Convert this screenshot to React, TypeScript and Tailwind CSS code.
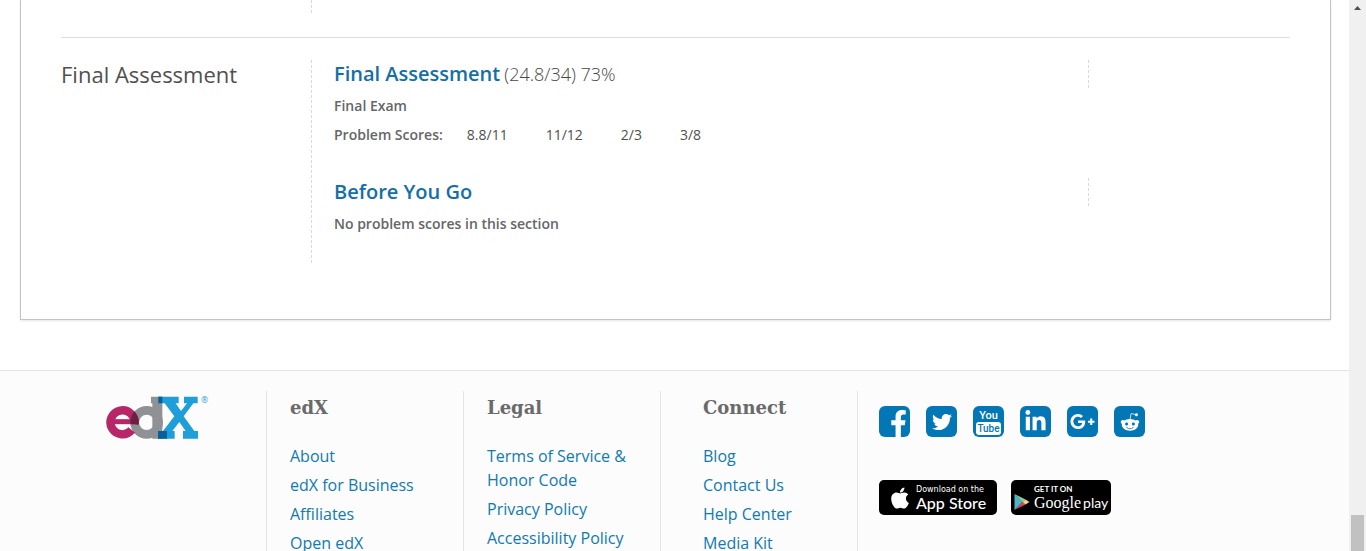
import type { ReactNode } from "react";
import {
  FaApple,
  FaFacebookF,
  FaGooglePlusG,
  FaLinkedinIn,
  FaRedditAlien,
  FaTwitter,
} from "react-icons/fa";

type Section = {
  title: string;
  total?: string;
  note: string;
  scores: string[];
};

const sections: Section[] = [
  {
    title: "Final Assessment",
    total: "(24.8/34) 73%",
    note: "Final Exam",
    scores: ["8.8/11", "11/12", "2/3", "3/8"],
  },
  { title: "Before You Go", note: "No problem scores in this section", scores: [] },
];

function DashedLine() {
  return (
    <div className="w-px shrink-0 self-stretch bg-[repeating-linear-gradient(to_bottom,#dadada_0px,#dadada_3px,transparent_3px,transparent_5px)]" />
  );
}

function SectionScores({ title, total, note, scores }: Section) {
  return (
    <section>
      <div className="mr-[201px] flex h-7 justify-between">
        <h3 className="text-xl leading-7 font-semibold">
          <a href="#section" className="text-[#126fa8]">
            {title}
          </a>
          {total && <span className="ml-1 text-lg leading-7 font-light text-[#474747]">{total}</span>}
        </h3>
        <DashedLine />
      </div>
      <p className="mt-1.5 text-sm leading-6 font-semibold text-[#646668]">{note}</p>
      {scores.length > 0 && (
        <dl className="mt-[5px] flex text-sm leading-6 text-[#505050]">
          <dt className="mr-6 font-semibold text-[#646668]">Problem Scores:</dt>
          <dd>
            <ol className="flex gap-[38px]">
              {scores.map((score) => (
                <li key={score}>{score}</li>
              ))}
            </ol>
          </dd>
        </dl>
      )}
    </section>
  );
}

function EdxLogo() {
  return (
    <svg viewBox="48 41 318 138" className="h-[46px] w-[106px]" role="img" aria-label="edX">
      <defs>
        <clipPath id="letter-d">
          <path
            clipRule="evenodd"
            d="M170 80a49 49 0 1 0 .1 0zM170 106a23 23 0 1 1-.1 0z"
          />
        </clipPath>
      </defs>
      <circle cx="170" cy="129" r="36" fill="none" stroke="#8f9194" strokeWidth="26" />
      <path d="M183 52h34v126h-30V72h-4z" fill="#8f9194" />
      <g fill="none" stroke="#b72667">
        <path d="M133 134A36 36 0 1 0 125 152" strokeWidth="25" />
        <path d="M68 127h77" strokeWidth="15" />
      </g>
      <g fill="none" stroke="#6e1f45" clipPath="url(#letter-d)">
        <path d="M133 134A36 36 0 1 0 125 152" strokeWidth="25" />
        <path d="M68 127h77" strokeWidth="15" />
      </g>
      <path
        fill="#1f9fd9"
        d="M205 52h61v20h-9l16 23 18-23h-9V52h41v20h-13l-29 39 32 44h11v23h-45v-23h8l-19-27-21 27h7v23h-50v-23h15l34-44-29-39h-19z"
      />
      <path fill="#07609c" d="M205 52h12v20h-12zM204 155h27v23h-27z" />
      <text x="333" y="70" fontSize="26" fill="#1f9fd9" fontFamily="Open Sans, sans-serif">
        ®
      </text>
    </svg>
  );
}

function SocialLink({ label, children }: { label: string; children: ReactNode }) {
  return (
    <a
      href="#social"
      aria-label={label}
      className="flex size-[31px] items-center justify-center overflow-hidden rounded-md bg-[#0376b5] text-white"
    >
      {children}
    </a>
  );
}

function YouTubeMark() {
  return (
    <span className="flex flex-col items-center font-[Roboto,sans-serif] font-medium">
      <span className="text-[11px] leading-[13px]">You</span>
      <span className="rounded-[3px] bg-white px-px text-[10px] leading-[13px] text-[#0376b5]">
        Tube
      </span>
    </span>
  );
}

function PlayMark() {
  return (
    <svg viewBox="0 0 16 18" className="h-[18px] w-4 shrink-0" aria-hidden="true">
      <path d="M0.5 1v16l8-8z" fill="#4bb8c9" />
      <path d="M0.5 1l8 8 3-2.6z" fill="#8ccf9a" />
      <path d="M0.5 17l8-8 3 2.6z" fill="#d9475c" />
      <path d="M11.5 6.4L8.5 9l3 2.6L15.500 9z" fill="#f6d28a" />
    </svg>
  );
}

function LinkColumn({ title, links, wide }: { title: string; links: string[]; wide?: boolean }) {
  return (
    <nav
      aria-label={title}
      className={`w-[197px] shrink-0 border-r border-[#e4e4e4] pt-[5px] pr-2 ${wide ? "pl-[42px]" : "pl-[23px]"}`}
    >
      <h2 className="font-['DejaVu_Serif',serif] text-lg leading-6 font-bold text-[#6a6a6a]">
        {title}
      </h2>
      <ul className="mt-6 flex flex-col gap-[5px]">
        {links.map((link) => (
          <li key={link}>
            <a href="#footer" className="block text-base leading-6 text-[#0f7ab3]">
              {link}
            </a>
          </li>
        ))}
      </ul>
    </nav>
  );
}

export default function App() {
  return (
    <div className="flex h-screen overflow-hidden bg-white font-['Open_Sans',sans-serif]">
      <div className="min-w-0 flex-1 overflow-hidden">
        <main className="mr-[18px] ml-5 border border-t-0 border-[#c4c4c4] px-10 pb-[54px] shadow-[0_1px_2px_rgba(0,0,0,0.1)]">
          <div className="flex h-[15px] pl-[250px]">
            <DashedLine />
          </div>
          <div className="mt-[22px] flex border-t border-[#dedede] pt-[22px]">
            <h2 className="w-[250px] shrink-0 text-[22px] leading-7 text-[#505050]">
              Final Assessment
            </h2>
            <DashedLine />
            <div className="flex flex-1 flex-col gap-[31px] pb-[29px] pl-[22px]">
              {sections.map((section) => (
                <SectionScores key={section.title} {...section} />
              ))}
            </div>
          </div>
        </main>

        <footer className="mt-[50px] border-t border-[#e4e4e4] bg-[#fcfcfc] pt-5">
          <div className="mx-auto flex max-w-[1209px]">
            <div className="w-[197px] shrink-0 border-r border-[#e4e4e4] pt-0.5 pl-9">
              <a href="#home" className="inline-block">
                <EdxLogo />
              </a>
            </div>
            <LinkColumn title="edX" links={["About", "edX for Business", "Affiliates", "Open edX"]} />
            <LinkColumn
              title="Legal"
              links={["Terms of Service & Honor Code", "Privacy Policy", "Accessibility Policy"]}
            />
            <LinkColumn
              title="Connect"
              links={["Blog", "Contact Us", "Help Center", "Media Kit"]}
              wide
            />
            <div className="flex-1 pt-[15px] pl-[21px]">
              <div className="flex gap-4">
                <SocialLink label="Facebook">
                  <FaFacebookF className="mt-1 ml-2 size-[27px]" />
                </SocialLink>
                <SocialLink label="Twitter">
                  <FaTwitter className="size-5" />
                </SocialLink>
                <SocialLink label="YouTube">
                  <YouTubeMark />
                </SocialLink>
                <SocialLink label="LinkedIn">
                  <FaLinkedinIn className="size-[23px]" />
                </SocialLink>
                <SocialLink label="Google Plus">
                  <FaGooglePlusG className="size-[25px]" />
                </SocialLink>
                <SocialLink label="Reddit">
                  <FaRedditAlien className="size-5" />
                </SocialLink>
              </div>
              <div className="mt-[43px] flex gap-3.5">
                <a
                  href="#ios"
                  className="flex h-[35px] w-[118px] items-center gap-1 rounded-[5px] bg-black pl-[9px] text-white"
                >
                  <FaApple className="size-6 shrink-0" />
                  <span className="flex flex-col whitespace-nowrap">
                    <span className="font-['DejaVu_Sans',sans-serif] text-[8px] leading-[11px]">
                      Download on the
                    </span>
                    <span className="font-[Lato,sans-serif] text-base leading-4 font-medium">
                      App Store
                    </span>
                  </span>
                </a>
                <a
                  href="#android"
                  className="flex h-[35px] w-[100px] items-center gap-1 rounded-[5px] bg-black pl-[3px] text-white"
                >
                  <span className="pt-2">
                    <PlayMark />
                  </span>
                  <span className="flex flex-col whitespace-nowrap">
                    <span className="font-[Lato,sans-serif] text-[8px] leading-[10px] font-bold">
                      GET IT ON
                    </span>
                    <span className="flex items-baseline gap-0.5 leading-[18px]">
                      <span className="font-['Liberation_Serif',serif] text-base leading-[18px]">
                        Google
                      </span>
                      <span className="font-[Lato,sans-serif] text-sm leading-[18px]">play</span>
                    </span>
                  </span>
                </a>
              </div>
            </div>
          </div>
        </footer>
      </div>

      <div className="flex w-[17px] shrink-0 flex-col justify-between bg-[#f0f0f0]" aria-hidden="true">
        <svg viewBox="0 0 17 17" className="size-[17px]">
          <path d="M5 10l3.500-4 3.500 4z" fill="#505050" />
        </svg>
        <div className="mx-0.5 h-9 bg-[#c1c1c1]" />
      </div>
    </div>
  );
}
